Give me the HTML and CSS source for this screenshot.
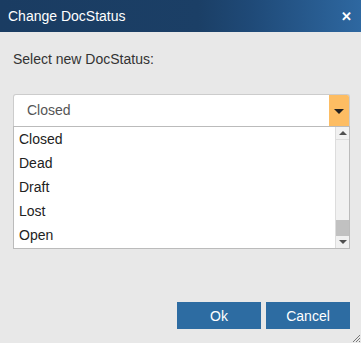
FILE: index.html
```html
<!DOCTYPE html>
<html>
<head>
<meta charset="utf-8">
<link rel="stylesheet" href="styles.css">
</head>
<body>
<div class="dialog">
  <div class="titlebar">
    <span class="title">Change DocStatus</span>
    <span class="close">&#x2715;</span>
  </div>
  <div class="content">
    <div class="label">Select new DocStatus:</div>
    <div class="combo">
      <div class="combo-input">Closed</div>
      <div class="combo-btn"><span class="caret"></span></div>
    </div>
    <div class="listbox">
      <ul class="items">
        <li>Closed</li>
        <li>Dead</li>
        <li>Draft</li>
        <li>Lost</li>
        <li>Open</li>
      </ul>
      <div class="scrollbar">
        <div class="sb-arrow up"><span class="tri-up"></span></div>
        <div class="sb-track"></div>
        <div class="sb-thumb"></div>
        <div class="sb-arrow down"><span class="tri-down"></span></div>
      </div>
    </div>
  </div>
  <div class="buttons">
    <button class="btn">Ok</button>
    <button class="btn">Cancel</button>
  </div>
  <svg class="grip" width="10" height="10" viewBox="0 0 10 10">
    <line x1="9" y1="2" x2="2" y2="9" stroke="#777" stroke-width="1"/>
    <line x1="9" y1="5" x2="5" y2="9" stroke="#777" stroke-width="1"/>
    <line x1="9" y1="8" x2="8" y2="9" stroke="#777" stroke-width="1"/>
  </svg>
</div>
</body>
</html>
```
FILE: styles.css
```css
html, body {
  margin: 0;
  padding: 0;
  background: #e8e8e8;
}
.dialog {
  position: relative;
  width: 361px;
  height: 343px;
  background: #e8e8e8;
  font-family: "Liberation Sans", Arial, sans-serif;
  color: #333;
  display: flex;
  flex-direction: column;
  overflow: hidden;
}
.titlebar {
  height: 32px;
  flex: none;
  background: linear-gradient(to right, #1a3c62 0%, #1b3f66 55%, #1f4a78 70%, #2e68a1 100%);
  display: flex;
  align-items: center;
  justify-content: space-between;
  padding: 0 8px 0 8px;
  box-sizing: border-box;
}
.title {
  color: #fff;
  font-size: 14px;
}
.close {
  color: #fff;
  font-size: 13px;
  font-weight: bold;
  margin-right: 1px;
}
.content {
  padding: 19px 11px 0 13px;
}
.label {
  font-size: 14px;
  line-height: 16px;
  color: #333;
}
.combo {
  margin-top: 27px;
  height: 32px;
  box-sizing: border-box;
  border: 1px solid #ccc;
  border-bottom: none;
  border-radius: 3px 3px 0 0;
  background: #fff;
  display: flex;
  overflow: hidden;
}
.combo-input {
  flex: 1;
  font-size: 14px;
  line-height: 30px;
  padding-left: 13px;
  color: #555;
}
.combo-btn {
  width: 20px;
  background: #fdbd63;
  display: flex;
  align-items: center;
  justify-content: center;
}
.caret {
  width: 0;
  height: 0;
  border-left: 5px solid transparent;
  border-right: 5px solid transparent;
  border-top: 5px solid #222;
  margin-top: 1px;
}
.listbox {
  height: 123px;
  box-sizing: border-box;
  border: 1px solid #bbb;
  background: #fff;
  display: flex;
}
.items {
  list-style: none;
  margin: 0;
  padding: 0;
  flex: 1;
}
.items li {
  height: 24px;
  line-height: 24px;
  font-size: 14px;
  padding-left: 5px;
  color: #222;
}
.scrollbar {
  width: 13px;
  display: flex;
  flex-direction: column;
  background: #f1f1f1;
  border-left: 1px solid #ddd;
}
.sb-arrow {
  height: 12px;
  display: flex;
  align-items: center;
  justify-content: center;
  background: #f1f1f1;
}
.sb-track {
  flex: 1;
  background: #f1f1f1;
  border-top: 1px solid #ddd;
}
.sb-thumb {
  height: 16px;
  background: #c1c1c1;
}
.tri-up {
  width: 0; height: 0;
  border-left: 4px solid transparent;
  border-right: 4px solid transparent;
  border-bottom: 4px solid #505050;
}
.tri-down {
  width: 0; height: 0;
  border-left: 4px solid transparent;
  border-right: 4px solid transparent;
  border-top: 4px solid #505050;
}
.buttons {
  display: flex;
  justify-content: flex-end;
  gap: 5px;
  padding: 0 11px 0 0;
  margin-top: 53px;
}
.btn {
  width: 84px;
  height: 27px;
  border: none;
  background: #2d6ca2;
  color: #fff;
  font-family: "Liberation Sans", Arial, sans-serif;
  font-size: 14px;
  padding: 0;
  cursor: pointer;
}
.grip {
  position: absolute;
  right: 0;
  bottom: 0;
}
```
